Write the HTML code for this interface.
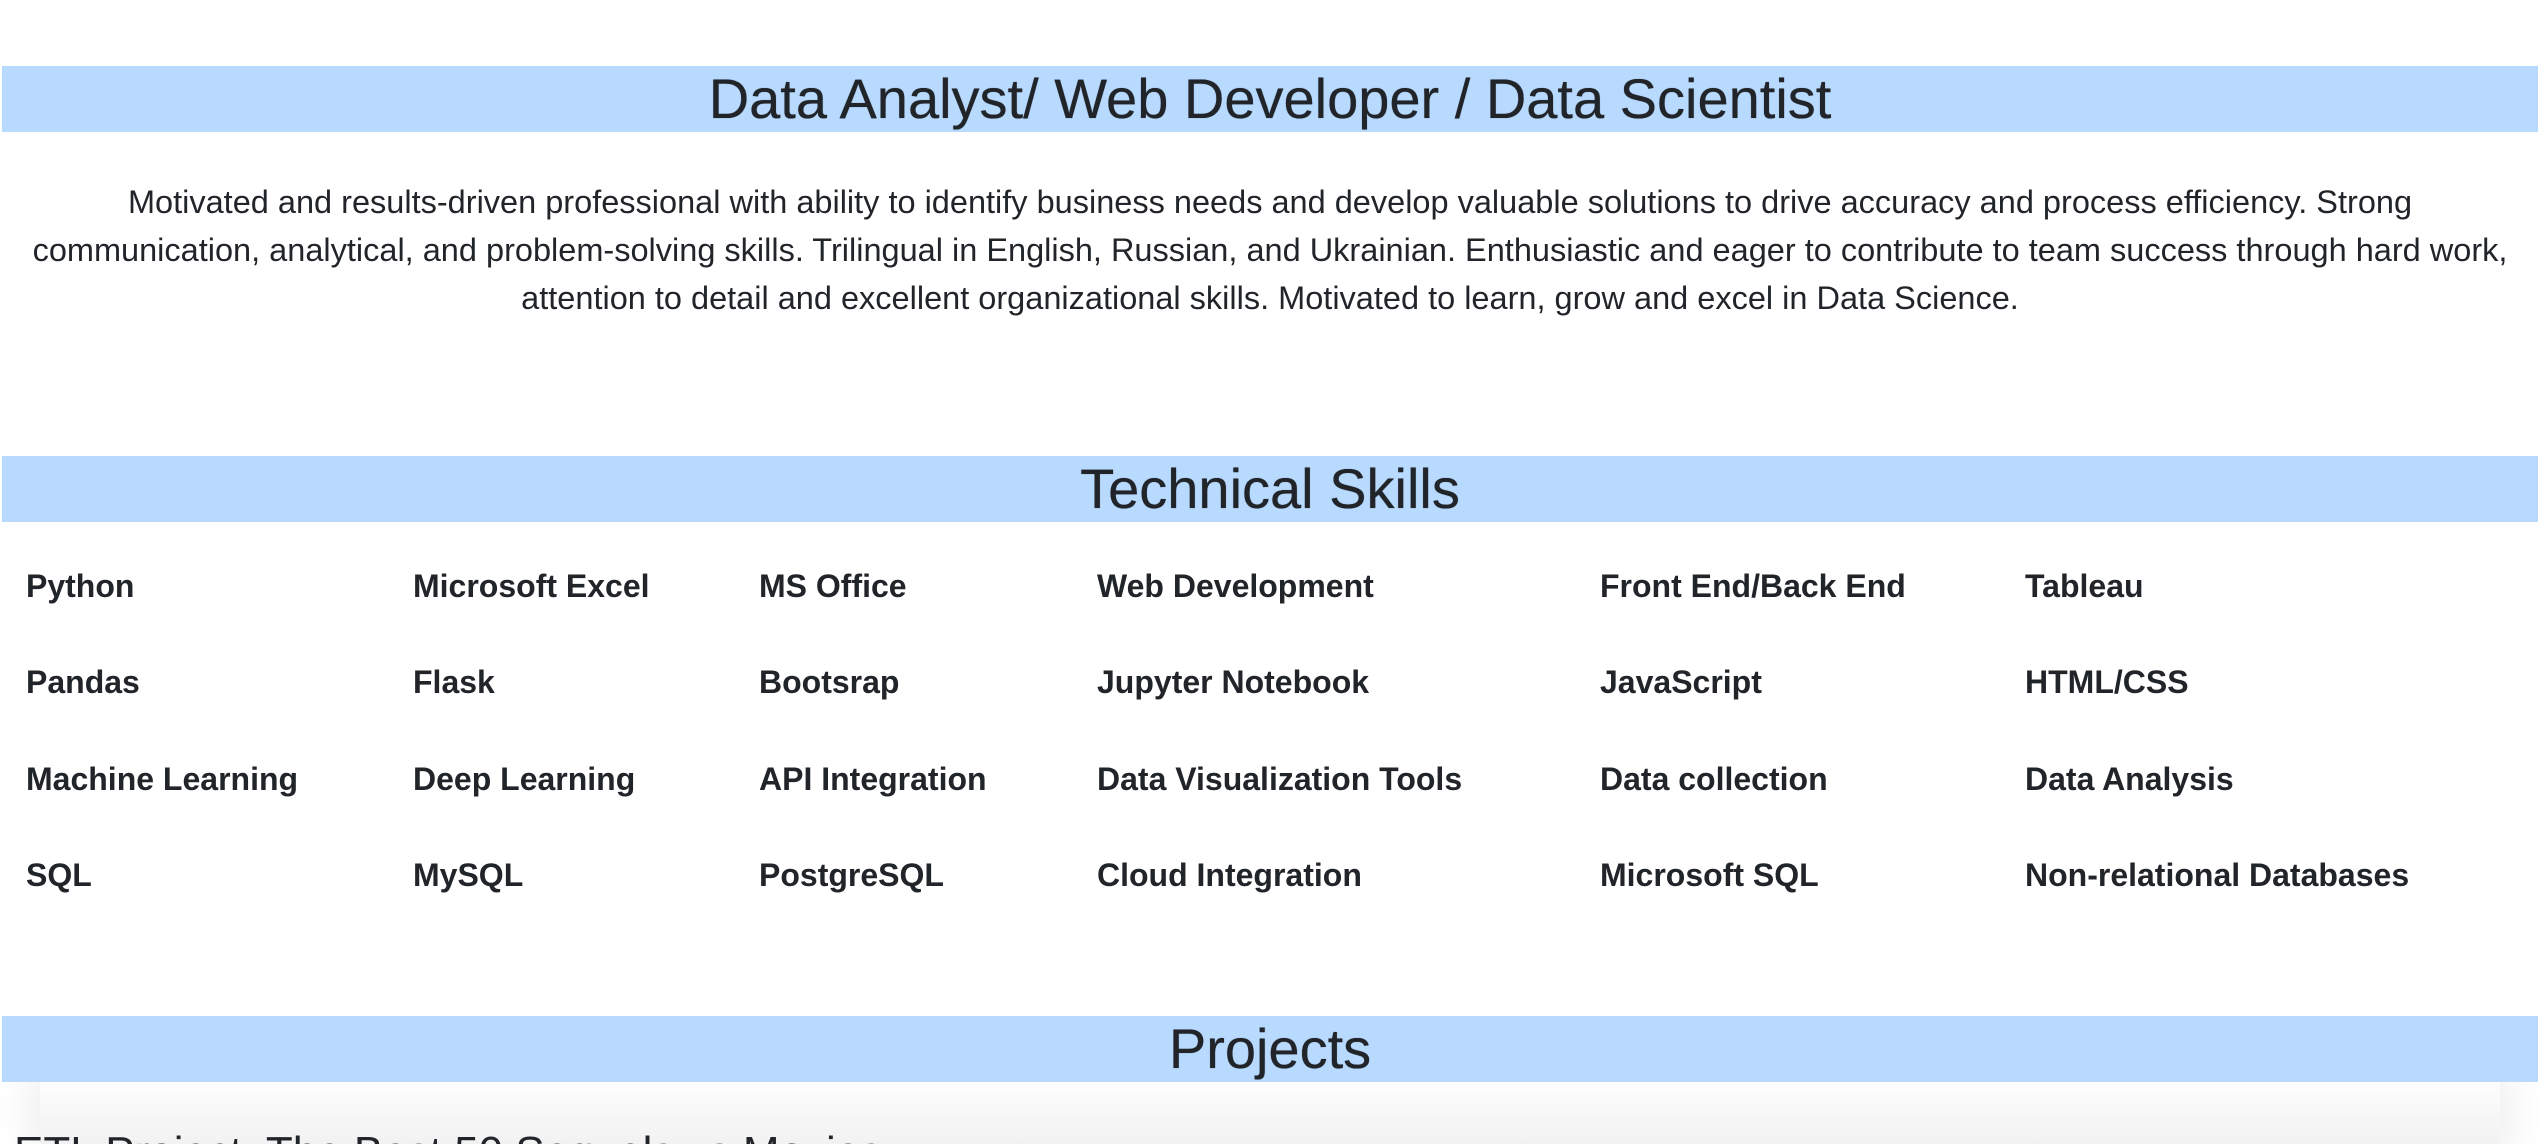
<!DOCTYPE html>
<html><head><meta charset="utf-8"><style>
html,body{margin:0;padding:0;background:#fff;width:2540px;height:1144px;max-height:1144px;overflow:hidden;font-family:"Liberation Sans",sans-serif;color:#212529;position:relative}
.bar{position:absolute;left:2px;width:2536px;height:66px;background:#b8daff;text-align:center;font-size:56px;line-height:66px;font-weight:500;text-shadow:0 0 0.6px #212529}
.p{position:absolute;left:0;width:2540px;top:178px;text-align:center;font-size:32.5px;line-height:48px}
.sk{position:absolute;font-size:32px;font-weight:bold;white-space:nowrap}
.card{position:absolute;left:40px;top:1082px;width:2460px;height:62px;box-shadow:0 0 40px 10px rgba(0,0,0,0.07);background:linear-gradient(#fdfdfd,#f2f2f2)}
.ct{position:absolute;left:14px;top:1128px;font-size:44px;font-weight:500;white-space:nowrap;line-height:50px;height:16px;overflow:hidden}
</style></head><body>
<div class="bar" style="top:66px">Data Analyst/ Web Developer / Data Scientist</div>
<div class="p">Motivated and results-driven professional with ability to identify business needs and develop valuable solutions to drive accuracy and process efficiency. Strong<br>communication, analytical, and problem-solving skills. Trilingual in English, Russian, and Ukrainian. Enthusiastic and eager to contribute to team success through hard work,<br>attention to detail and excellent organizational skills. Motivated to learn, grow and excel in Data Science.</div>
<div class="bar" style="top:456px">Technical Skills</div>

<div class="sk" style="left:26px;top:568px">Python</div>
<div class="sk" style="left:413px;top:568px">Microsoft Excel</div>
<div class="sk" style="left:759px;top:568px">MS Office</div>
<div class="sk" style="left:1097px;top:568px">Web Development</div>
<div class="sk" style="left:1600px;top:568px">Front End/Back End</div>
<div class="sk" style="left:2025px;top:568px">Tableau</div>

<div class="sk" style="left:26px;top:664px">Pandas</div>
<div class="sk" style="left:413px;top:664px">Flask</div>
<div class="sk" style="left:759px;top:664px">Bootsrap</div>
<div class="sk" style="left:1097px;top:664px">Jupyter Notebook</div>
<div class="sk" style="left:1600px;top:664px">JavaScript</div>
<div class="sk" style="left:2025px;top:664px">HTML/CSS</div>

<div class="sk" style="left:26px;top:761px">Machine Learning</div>
<div class="sk" style="left:413px;top:761px">Deep Learning</div>
<div class="sk" style="left:759px;top:761px">API Integration</div>
<div class="sk" style="left:1097px;top:761px">Data Visualization Tools</div>
<div class="sk" style="left:1600px;top:761px">Data collection</div>
<div class="sk" style="left:2025px;top:761px">Data Analysis</div>

<div class="sk" style="left:26px;top:857px">SQL</div>
<div class="sk" style="left:413px;top:857px">MySQL</div>
<div class="sk" style="left:759px;top:857px">PostgreSQL</div>
<div class="sk" style="left:1097px;top:857px">Cloud Integration</div>
<div class="sk" style="left:1600px;top:857px">Microsoft SQL</div>
<div class="sk" style="left:2025px;top:857px">Non-relational Databases</div>

<div class="card"></div>
<div class="bar" style="top:1016px">Projects</div>
<div class="ct">ETL Project: The Best 50 Sequels vs Movies</div>
</body></html>
